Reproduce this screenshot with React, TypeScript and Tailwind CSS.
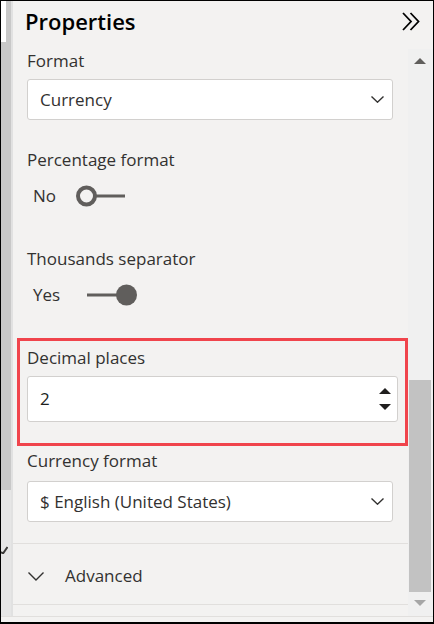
import React from 'react';

const font = { fontFamily: '"Open Sans", "Noto Sans", sans-serif' };

const Chevron: React.FC<{ className?: string }> = ({ className }) => (
    <svg className={className} width="13" height="7" viewBox="0 0 13 7" fill="none">
        <path d="M0.5 0.5L6.5 6.2L12.5 0.5" stroke="#323130" strokeWidth="1.4" />
    </svg>
);

const Dropdown: React.FC<{ value: string }> = ({ value }) => (
    <div className="h-[41px] bg-white border border-[#d2d0ce] rounded-[3px] flex items-center justify-between pl-[12px] pr-[8px]">
        <span className="text-[17px] leading-[24px] text-[#323130]">{value}</span>
        <Chevron />
    </div>
);

const Label: React.FC<{ children: React.ReactNode; className?: string }> = ({ children, className }) => (
    <div className={`text-[17px] leading-[24px] text-[#323130] ${className ?? ''}`}>{children}</div>
);

export default function App() {
    return (
        <div className="w-[434px] h-[624px] bg-black pt-px px-px pb-[2px]" style={font}>
            <div className="h-full bg-[#f3f2f1] flex flex-col">
                <div className="flex flex-1 min-h-0">
                    {/* left strip */}
                    <div className="w-[10px] flex flex-col">
                        <div className="h-[489px] bg-[#c8c8c8] flex">
                            <div className="w-[5px] h-[41px] bg-white" />
                        </div>
                        <div className="flex-1 bg-[#e6e6e6] pt-[56px]">
                            <svg width="7" height="8" viewBox="0 0 7 8">
                                <path d="M0 6L2 7.5L6.5 1" stroke="#3b3a39" strokeWidth="2" fill="none" />
                            </svg>
                        </div>
                    </div>
                    <div className="w-[2px] bg-[#e1e1e1]" />

                    {/* panel */}
                    <div className="flex-1 flex flex-col">
                        <div className="h-[48px] flex items-start justify-between pl-[12px] pr-[13px]">
                            <div className="text-[22px] leading-[30px] font-semibold text-black pt-[5px]">Properties</div>
                            <svg className="mt-[11px]" width="18" height="19" viewBox="0 0 18 19" fill="none">
                                <path d="M1 1L9 9.5L1 18" stroke="#000" strokeWidth="1.8" />
                                <path d="M8.5 1L16.5 9.5L8.5 18" stroke="#000" strokeWidth="1.8" />
                            </svg>
                        </div>

                        <div className="flex flex-1 min-h-0">
                            <div className="w-[395px] flex flex-col">
                                <div className="pl-[14px] pr-[15px]">
                                    <Label>Format</Label>
                                    <div className="mt-[6px]">
                                        <Dropdown value="Currency" />
                                    </div>

                                    <Label className="mt-[28px]">Percentage format</Label>
                                    <div className="mt-[12px] h-[24px] flex items-center pl-[6px]">
                                        <span className="text-[17px] leading-[24px] text-[#323130] w-[43px]">No</span>
                                        <svg width="50" height="22" viewBox="0 0 50 22" fill="none">
                                            <circle cx="10.5" cy="11" r="8.5" stroke="#605e5c" strokeWidth="4" />
                                            <rect x="20" y="9.5" width="29" height="3" fill="#605e5c" />
                                        </svg>
                                    </div>

                                    <Label className="mt-[39px]">Thousands separator</Label>
                                    <div className="mt-[12px] h-[24px] flex items-center pl-[6px]">
                                        <span className="text-[17px] leading-[24px] text-[#323130] w-[54px]">Yes</span>
                                        <svg width="52" height="22" viewBox="0 0 52 22" fill="none">
                                            <rect x="0" y="9.5" width="32" height="3" fill="#605e5c" />
                                            <circle cx="39.5" cy="11" r="10.5" fill="#605e5c" />
                                        </svg>
                                    </div>
                                </div>

                                <div className="mt-[31px] ml-[4px] border-[3px] border-[#f0444c] pt-[5px] pb-[21px] pl-[7px] pr-[7px]">
                                    <Label>Decimal places</Label>
                                    <div className="mt-[6px] h-[46px] bg-white border border-[#d2d0ce] rounded-[3px] flex items-center justify-between pl-[12px] pr-[6px]">
                                        <span className="text-[17px] leading-[24px] text-[#201f1e]">2</span>
                                        <div className="flex flex-col gap-[10px]">
                                            <svg width="12" height="6" viewBox="0 0 12 6">
                                                <path d="M0 6L6 0L12 6Z" fill="#201f1e" />
                                            </svg>
                                            <svg width="12" height="6" viewBox="0 0 12 6">
                                                <path d="M0 0L12 0L6 6Z" fill="#201f1e" />
                                            </svg>
                                        </div>
                                    </div>
                                </div>

                                <div className="pl-[14px] pr-[15px]">
                                    <Label className="mt-[3px]">Currency format</Label>
                                    <div className="mt-[8px]">
                                        <Dropdown value="$ English (United States)" />
                                    </div>
                                </div>

                                <div className="mt-[21px] h-px bg-[#e1dfdd]" />
                                <div className="mt-[20px] h-[24px] flex items-center pl-[15px]">
                                    <svg width="16" height="9" viewBox="0 0 16 9" fill="none">
                                        <path d="M0.5 0.5L8 8L15.5 0.5" stroke="#323130" strokeWidth="1.4" />
                                    </svg>
                                    <span className="ml-[21px] text-[17px] leading-[24px] text-[#323130]">Advanced</span>
                                </div>
                                <div className="mt-[16px] h-px bg-[#e1dfdd]" />
                            </div>

                            {/* scrollbar */}
                            <div className="flex-1 flex flex-col items-center bg-[#f0f0f0] pt-[9px]">
                                <svg className="ml-[-2px]" width="12" height="6" viewBox="0 0 12 6">
                                    <path d="M0 6L6 0L12 6Z" fill="#605e5c" />
                                </svg>
                                <div className="h-[316px]" />
                                <div className="w-full pl-px pr-[2px]">
                                    <div className="h-[212px] bg-[#c2c2c2]" />
                                </div>
                                <div className="h-[8px]" />
                                <svg className="ml-[-2px]" width="12" height="6" viewBox="0 0 12 6">
                                    <path d="M0 0L12 0L6 6Z" fill="#a6a6a6" />
                                </svg>
                            </div>
                        </div>
                    </div>
                </div>
                <div className="h-px bg-[#e1dfdd]" />
                <div className="h-[5px]" />
            </div>
        </div>
    );
}
